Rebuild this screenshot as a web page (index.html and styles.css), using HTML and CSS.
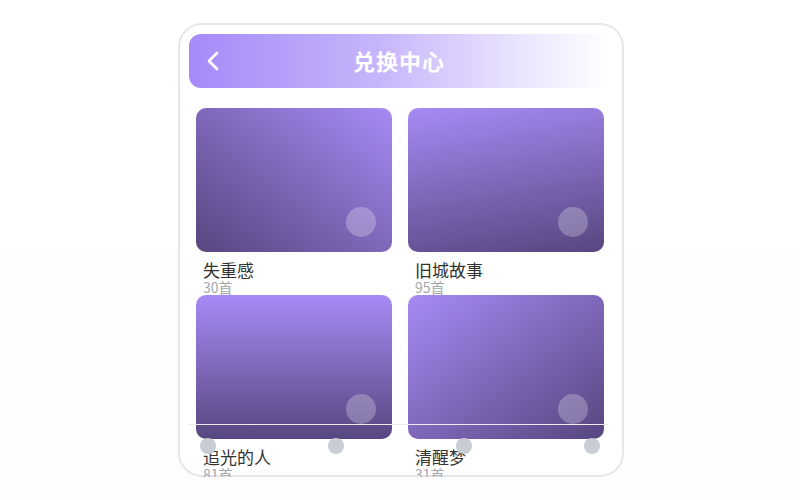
FILE: index.html
```
<!DOCTYPE html>
<html lang="zh-CN">
<head>
  <meta charset="UTF-8">
  <title>兑换中心</title>
  <link rel="stylesheet" href="styles.css">
</head>
<body>
  <div class="phone">
    <header class="topbar">
      <svg class="back" width="12" height="20" viewBox="0 0 12 20">
        <path d="M10 2 L2 10 L10 18" fill="none" stroke="#fff" stroke-width="2.6" stroke-linecap="round" stroke-linejoin="round"/>
      </svg>
      <h1>兑换中心</h1>
    </header>

    <div class="grid">
      <div class="item">
        <div class="cover c1"><span class="play"></span></div>
        <div class="name">失重感</div>
        <div class="count">30首</div>
      </div>
      <div class="item">
        <div class="cover c2"><span class="play"></span></div>
        <div class="name">旧城故事</div>
        <div class="count">95首</div>
      </div>
      <div class="item">
        <div class="cover c3"><span class="play"></span></div>
        <div class="name">追光的人</div>
        <div class="count">81首</div>
      </div>
      <div class="item">
        <div class="cover c4"><span class="play"></span></div>
        <div class="name">清醒梦</div>
        <div class="count">31首</div>
      </div>
    </div>

    <!-- bottom tabs -->
    <nav class="tabbar">
      <span class="dot"></span>
      <span class="dot"></span>
      <span class="dot"></span>
      <span class="dot"></span>
    </nav>
  </div>
</body>
</html>
```

FILE: styles.css
```
:root {
  --purple: #a78bfa;
  --purple-dark: #56457f;
  --text: #333333;
  --muted: #a3a7ae;
  --font: "Noto Sans CJK SC", "Noto Sans", sans-serif;
}
*, *::before, *::after {
  box-sizing: border-box;
  margin: 0;
  padding: 0;
}
html {
  height: 100%;
  background: linear-gradient(#ffffff 0, #ffffff 250px, #fdfdfd 250px);
}
body {
  font-family: var(--font);
  color: var(--text);
}
.phone {
  position: relative;
  width: 446px;
  height: 454px;
  margin: 23px 0 0 178px;
  padding: 9px;
  border: 2px solid #e6e7eb;
  border-radius: 24px;
  background: #ffffff;
}
.topbar {
  position: relative;
  width: 420px;
  height: 54px;
  border-radius: 12px;
  background: linear-gradient(90deg, #a68af8 0%, #c6b5fb 45%, #ece6fe 80%, #ffffff 100%);
  display: flex;
  align-items: center;
  justify-content: center;
}
.topbar .back {
  position: absolute;
  left: 18px;
  top: 17px;
}
.topbar h1 {
  font-size: 22px;
  line-height: 26px;
  margin-top: -2px;
  font-weight: 700;
  color: #ffffff;
  letter-spacing: 1px;
}
.grid {
  width: 408px;
  margin: 20px 0 0 7px;
  display: grid;
  grid-template-columns: 196px 196px;
  column-gap: 16px;
}
.cover {
  position: relative;
  height: 144px;
  border-radius: 10px;
}
.c1 { background: linear-gradient(to bottom left, #a78af5, #57467f); }
.c2 { background: linear-gradient(170deg, #a78af5, #57467f); }
.c3 { background: linear-gradient(180deg, #a78af5, #57467f); }
.c4 { background: linear-gradient(to bottom right, #a78af5, #57467f); }
.play {
  position: absolute;
  right: 16px;
  bottom: 15px;
  width: 30px;
  height: 30px;
  border-radius: 50%;
  background: rgba(255, 255, 255, 0.25);
}
.name {
  margin-top: 8px;
  padding-left: 7px;
  font-size: 17px;
  line-height: 20px;
  color: var(--text);
}
.count {
  padding-left: 7px;
  font-size: 14px;
  line-height: 15px;
  color: var(--muted);
}
.tabbar {
  position: absolute;
  left: 9px;
  top: 399px;
  width: 420px;
  height: 40px;
  border-top: 1px solid #ececef;
  padding: 13px 9px 0 11px;
  display: flex;
  justify-content: space-between;
  align-items: flex-start;
}
.dot {
  width: 16px;
  height: 16px;
  border-radius: 50%;
  background: #c9ccd2;
}
```
